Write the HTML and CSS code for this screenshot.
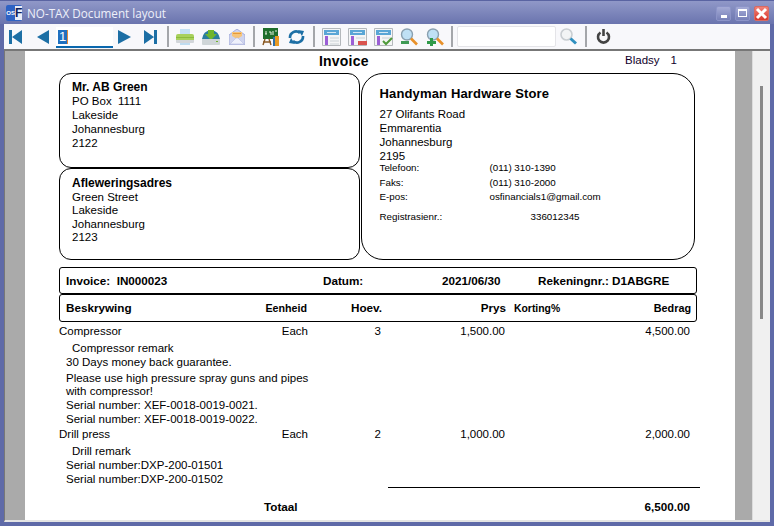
FILE: index.html
```html
<!DOCTYPE html>
<html lang="en">
<head>
  <meta charset="UTF-8" />
  <title>NO-TAX Document layout</title>
  <link rel="stylesheet" href="styles.css">
</head>
<body>
  <div class="window">
    <header class="titlebar">
      <div class="logo"><span class="logo-os">OS</span><span class="logo-f">F</span></div>
      <div class="title-text">NO-TAX Document layout</div>
      <div class="win-btn"><span class="glyph-min"></span></div>
      <div class="win-btn"><span class="glyph-max"></span></div>
      <div class="win-btn win-close">
        <svg width="13" height="13" viewBox="0 0 13 13"><path d="M2 2l9 9M11 2l-9 9" stroke="#fff" stroke-width="3"/></svg>
      </div>
    </header>

    <div class="toolbar">
      <div class="group nav">
        <div class="slot slot-first"><svg width="13" height="14" viewBox="0 0 13 14"><path class="nav-ico" d="M0 0h3v14H0zM13 0v14L3 7z"/></svg></div>
        <div class="slot slot-prev"><svg width="12" height="14" viewBox="0 0 12 14"><path class="nav-ico" d="M12 0v14L0 7z"/></svg></div>
        <div class="page-input"><span class="page-sel">1</span><span class="page-caret"></span></div>
        <div class="slot slot-next"><svg width="13" height="14" viewBox="0 0 13 14"><path class="nav-ico" d="M0 0v14l13-7z"/></svg></div>
        <div class="slot slot-last"><svg width="13" height="14" viewBox="0 0 13 14"><path class="nav-ico" d="M0 0v14l10-7zM10 0h3v14h-3z"/></svg></div>
      </div>
      <div class="sep"></div>
      <div class="group">
        <div class="slot"><svg width="18" height="16" viewBox="0 0 18 16">
          <path d="M4 0h10v6H4z" fill="#c4e0f4"/>
          <path d="M0 7q0-2 2-2h14q2 0 2 2v4H0z" fill="#a8d05c"/>
          <path d="M0 8h18v1H0z" fill="#8cbc3c"/>
          <path d="M0 11h18v2q0 1-1 1H1q-1 0-1-1z" fill="#d2d6da"/>
          <path d="M4 14h10v2H4z" fill="#c0dcf0"/>
        </svg></div>
        <div class="slot"><svg width="18" height="16" viewBox="0 0 18 16">
          <path d="M0 10q1-8 9-9 8 1 9 9z" fill="#2a7d9e"/>
          <path d="M6 1h6v4h3l-6 6-6-6h3z" fill="#6fb52c"/>
          <path d="M0 10h18v5q0 1-1 1H1q-1 0-1-1z" fill="#cfd5d8"/>
          <path d="M14 12h2v1h-2z" fill="#6fb52c"/>
        </svg></div>
        <div class="slot"><svg width="16" height="16" viewBox="0 0 16 16">
          <path d="M0 6l8-6 8 6v10H0z" fill="#cfd4ee" stroke="#a6aedb"/>
          <path d="M3 7V3h10v4l-5 3z" fill="#f6c47a"/>
          <path d="M4 4h8v1H4z" fill="#e59a3a"/>
          <path d="M1 15l6-6h2l6 6z" fill="#eef0fb" stroke="#b6bce2" stroke-width=".6"/>
        </svg></div>
      </div>
      <div class="sep"></div>
      <div class="group group-tools">
        <div class="slot"><svg width="18" height="18" viewBox="0 0 18 18">
          <path d="M1 0h15v11H1z" fill="#1f6e2c"/>
          <path d="M3 6h2M4 3v3M7 4h2v3M11 3v4M13 3h2" stroke="#e8f3df" stroke-width="1" fill="none"/>
          <path d="M3 11l-2 6M7 11l2 6M1 14h8" stroke="#8a5a24" stroke-width="1.4" fill="none"/>
          <path d="M11 9h3v9h-3z" fill="#2f6fa8"/>
          <path d="M13 8h4v10h-4z" fill="#e89a24"/>
        </svg></div>
        <div class="slot slot-refresh"><svg width="17" height="16" viewBox="0 0 17 16">
          <path d="M2 9a6 6 0 0 1 10-5" fill="none" stroke="#1d6fa5" stroke-width="2.6"/>
          <path d="M15 7a6 6 0 0 1-10 5" fill="none" stroke="#1d6fa5" stroke-width="2.6"/>
          <path d="M10 1l6 1-2 5z" fill="#1d6fa5"/>
          <path d="M7 15l-6-1 2-5z" fill="#1d6fa5"/>
        </svg></div>
      </div>
      <div class="sep"></div>
      <div class="group">
        <div class="slot"><svg width="19" height="18" viewBox="0 0 19 18">
          <path class="doc-frame" d="M.5.5h18v17H.5z"/>
          <path d="M2 2h15v5H2z" fill="#5aa6d6"/><path d="M5 4h9v1H5z" fill="#d6e8f4"/>
          <path d="M3 8h3v9H3z" fill="#9b5fd6"/>
          <path d="M8 9h9v2H8zM8 12h9v2H8zM8 15h9v2H8z" fill="#dfe3e6"/>
        </svg></div>
        <div class="slot"><svg width="19" height="18" viewBox="0 0 19 18">
          <path class="doc-frame" d="M.5.5h18v17H.5z"/>
          <path d="M2 2h15v5H2z" fill="#5aa6d6"/><path d="M5 4h9v1H5z" fill="#d6e8f4"/>
          <path d="M3 8h3v9H3z" fill="#9b5fd6"/>
          <path d="M8 9h9v2H8z" fill="#dfe3e6"/>
          <path d="M10 13h9v4h-9z" fill="#d9534f"/>
        </svg></div>
        <div class="slot"><svg width="19" height="18" viewBox="0 0 19 18">
          <path class="doc-frame" d="M.5.5h18v17H.5z"/>
          <path d="M2 2h15v5H2z" fill="#5aa6d6"/><path d="M5 4h9v1H5z" fill="#d6e8f4"/>
          <path d="M3 8h3v9H3z" fill="#9b5fd6"/>
          <path d="M8 9h9v2H8z" fill="#dfe3e6"/>
          <path d="M9 13l3 3 6-6" fill="none" stroke="#4f9a3a" stroke-width="2"/>
        </svg></div>
        <div class="slot"><svg width="18" height="18" viewBox="0 0 18 18">
          <circle cx="7" cy="6.5" r="5.5" fill="#bfe0f5" stroke="#8aa0b0" stroke-width="1.4"/>
          <path d="M11 10.500l6 6" stroke="#e8912a" stroke-width="2.600"/>
          <path d="M1 13h8v3H1z" fill="#3f9a55"/>
        </svg></div>
        <div class="slot"><svg width="18" height="18" viewBox="0 0 18 18">
          <circle cx="7" cy="6.5" r="5.5" fill="#bfe0f5" stroke="#8aa0b0" stroke-width="1.4"/>
          <path d="M11 10.500l6 6" stroke="#e8912a" stroke-width="2.600"/>
          <path d="M4 10h3v3h3v3H7v2H4v-2H1v-3h3z" fill="#2f9a4a"/>
        </svg></div>
      </div>
      <div class="sep"></div>
      <div class="group group-tools">
        <div class="search-box"></div>
        <div class="slot slot-refresh"><svg width="17" height="17" viewBox="0 0 17 17">
          <circle cx="6.500" cy="6.500" r="5.500" fill="#f2f4f5" stroke="#c9ced2" stroke-width="1.600"/>
          <path d="M10.500 10.500l5.500 5" stroke="#2f8fbf" stroke-width="3"/>
        </svg></div>
      </div>
      <div class="sep"></div>
      <div class="group">
        <div class="slot"><svg width="15" height="15" viewBox="0 0 15 15">
          <path d="M4.500 3.500a5.500 5.500 0 1 0 6 0" fill="none" stroke="#444" stroke-width="2.600"/>
          <path d="M7.500 0v7" stroke="#444" stroke-width="2.600"/>
        </svg></div>
      </div>
    </div>

    <div class="viewer">
      <main class="page">
        <div class="page-head">
          <div class="doc-title">Invoice</div>
          <div class="page-num"><span>Bladsy</span><span>1</span></div>
        </div>

        <section class="address-grid">
          <div class="address-col">
            <div class="box box-bill">
              <div class="b">Mr. AB Green</div>
              <div>PO Box&nbsp; 1111</div>
              <div>Lakeside</div>
              <div>Johannesburg</div>
              <div>2122</div>
            </div>
            <div class="box box-ship">
              <div class="b">Afleweringsadres</div>
              <div>Green Street</div>
              <div>Lakeside</div>
              <div>Johannesburg</div>
              <div>2123</div>
            </div>
          </div>
          <div class="box-company">
            <div class="company-name">Handyman Hardware Store</div>
            <div>27 Olifants Road</div>
            <div>Emmarentia</div>
            <div>Johannesburg</div>
            <div>2195</div>
            <div class="contact">
              <div class="contact-row"><span>Telefoon:</span><span>(011) 310-1390</span></div>
              <div class="contact-row row-faks"><span>Faks:</span><span>(011) 310-2000</span></div>
              <div class="contact-row row-epos"><span>E-pos:</span><span>osfinancials1@gmail.com</span></div>
              <div class="contact-row row-reg"><span>Registrasienr.:</span><span class="reg-no">336012345</span></div>
            </div>
          </div>
        </section>

        <div class="bar bar-info">
          <span>Invoice:&nbsp; IN000023</span>
          <span>Datum:</span>
          <span>2021/06/30</span>
          <span>Rekeningnr.: D1ABGRE</span>
        </div>

        <div class="bar bar-head cols">
          <span class="head-desc">Beskrywing</span>
          <span class="num head-unit">Eenheid</span>
          <span class="num">Hoev.</span>
          <span class="num">Prys</span>
          <span class="head-disc">Korting%</span>
          <span class="num head-amt">Bedrag</span>
        </div>

        <section class="lines">
          <div class="cols">
            <span>Compressor</span>
            <span class="num">Each</span>
            <span class="num">3</span>
            <span class="num">1,500.00</span>
            <span></span>
            <span class="num">4,500.00</span>
          </div>
          <div class="remark">Compressor remark</div>
          <div class="note">30 Days money back guarantee.</div>
          <div class="note note-gap">Please use high pressure spray guns and pipes</div>
          <div class="note note-tight">with compressor!</div>
          <div class="note">Serial number: XEF-0018-0019-0021.</div>
          <div class="note">Serial number: XEF-0018-0019-0022.</div>
          <div class="cols line-next">
            <span>Drill press</span>
            <span class="num">Each</span>
            <span class="num">2</span>
            <span class="num">1,000.00</span>
            <span></span>
            <span class="num">2,000.00</span>
          </div>
          <div class="remark">Drill remark</div>
          <div class="note">Serial number:DXP-200-01501</div>
          <div class="note">Serial number:DXP-200-01502</div>
        </section>

        <div class="total-rule"></div>
        <div class="cols total">
          <span></span>
          <span class="total-label">Totaal</span>
          <span></span>
          <span></span>
          <span></span>
          <span class="num">6,500.00</span>
        </div>
      </main>
      <div class="gutter"></div>
      <div class="scrollbar"><div class="thumb"></div></div>
    </div>
  </div>
</body>
</html>
```

FILE: styles.css
```css
* {
  margin: 0;
  padding: 0;
  box-sizing: border-box;
}

body {
  width: 774px;
  height: 526px;
  overflow: hidden;
  font-family: 'Liberation Sans', Arial, sans-serif;
  font-size: 11.5px;
  line-height: 14px;
  color: #000;
}

.window {
  height: 526px;
  display: flex;
  flex-direction: column;
  background: #5f6aa8;
  padding: 0 4px 4px;
}

/* title bar */
.titlebar {
  height: 24px;
  margin: 0 -4px;
  padding: 1px 5px 0 6px;
  display: flex;
  align-items: center;
  gap: 4px;
  background: linear-gradient(#9098c8, #6a74ae);
  border-top: 1px solid #5a64a2;
}

.logo {
  width: 16px;
  height: 16px;
  display: flex;
  align-items: center;
  justify-content: flex-end;
  background: #2e62c4;
  border-radius: 2px;
  font-weight: bold;
}

.logo-os {
  font-size: 6px;
  color: #fff;
}

.logo-f {
  width: 7px;
  font-size: 12px;
  color: #10205a;
  background: #e8ecf8;
  text-align: center;
}

.title-text {
  flex: 1;
  margin-left: 1px;
  font-family: 'Open Sans', sans-serif;
  font-size: 11.7px;
  color: #eef0fa;
}

.win-btn {
  width: 15px;
  height: 15px;
  display: flex;
  align-items: center;
  justify-content: center;
  background: linear-gradient(#a5abd6, #7780b8);
  border: 1px solid #8c94c8;
  border-radius: 2px;
}

.win-close {
  background: linear-gradient(#f0837a, #d8372c);
  border-color: #d86a62;
}

.glyph-min {
  width: 6px;
  height: 3px;
  margin-top: 7px;
  background: #fff;
}

.glyph-max {
  width: 9px;
  height: 8px;
  border: 1px solid #fff;
  border-top-width: 2px;
}

/* toolbar */
.toolbar {
  height: 25px;
  flex: none;
  display: flex;
  align-items: center;
  background: #f8f8fb;
}

.group {
  display: flex;
  align-items: center;
}

.nav {
  padding-right: 1px;
}

.group-tools {
  padding-right: 2px;
}

.slot {
  width: 26px;
  height: 22px;
  display: flex;
  align-items: center;
  justify-content: center;
}

.slot-first {
  width: 22px;
}

.slot-prev {
  margin-left: 4px;
}

.slot-next {
  width: 23px;
}

.slot-last {
  margin-left: 1px;
}

.slot-refresh {
  width: 24px;
}

.nav-ico {
  fill: #1d6fa5;
}

.doc-frame {
  fill: #f4f5f6;
  stroke: #b4b8bc;
}

.sep {
  width: 2px;
  height: 21px;
  margin: 0 3px;
  background: #a4a6aa;
}

.page-input {
  width: 57px;
  height: 21px;
  margin-top: 1px;
  padding: 3px 0 0 2px;
  display: flex;
  align-items: flex-start;
  background: #fff;
  border-bottom: 2px solid #0a68ae;
  font-size: 13px;
}

.page-sel {
  height: 14px;
  padding: 0 1px;
  background: #1f70c0;
  color: #fff;
}

.page-caret {
  width: 1px;
  height: 14px;
  background: #e08a3c;
}

.search-box {
  width: 99px;
  height: 21px;
  margin-left: 1px;
  background: #fff;
  border: 1px solid #e4e4e8;
  border-radius: 2px;
}

/* report viewer */
.viewer {
  flex: 1;
  display: flex;
  overflow: hidden;
  background: #aaa;
  border-top: 2px solid #777;
  border-left: 1px solid #777;
  border-bottom: 2px solid #e4e4e4;
}

.page {
  width: 710px;
  margin-left: 20px;
  flex: none;
  background: #fff;
  padding-left: 34px;
}

.gutter {
  flex: 1;
}

.scrollbar {
  width: 18px;
  flex: none;
  padding: 35px 0 0 7px;
  background: #f0f0f0;
  border-left: 1px solid #dcdcdc;
}

.thumb {
  width: 3px;
  height: 233px;
  background: #888;
}

.page-head {
  height: 22px;
  display: flex;
  padding: 2px 58px 0 260px;
}

.doc-title {
  font-size: 14px;
  line-height: 16px;
  font-weight: bold;
  letter-spacing: 0.2px;
}

.page-num {
  margin-left: auto;
  line-height: 15px;
  color: #10002a;
  display: flex;
  gap: 11px;
}

/* address boxes */
.address-grid {
  display: flex;
  gap: 1px;
  width: 636px;
  height: 187px;
}

.address-col {
  width: 301px;
  display: flex;
  flex-direction: column;
}

.box {
  border: 1px solid #000;
  border-radius: 12px;
  padding: 6px 12px 0;
}

.box-bill {
  height: 95px;
}

.box-ship {
  height: 92px;
  padding-top: 8px;
  line-height: 13.5px;
}

.b {
  font-size: 12px;
  font-weight: bold;
}

.box-company {
  width: 335px;
  border: 1px solid #000;
  border-radius: 22px;
  padding: 12px 18px 0;
}

.company-name {
  font-size: 13px;
  line-height: 16px;
  font-weight: bold;
  letter-spacing: 0.15px;
  margin-bottom: 5px;
}

.contact {
  font-size: 9.8px;
  line-height: 10px;
}

.contact-row {
  display: grid;
  grid-template-columns: 110px 1fr;
}

.row-faks {
  margin-top: 5px;
}

.row-epos {
  margin-top: 4px;
}

.row-reg {
  margin-top: 10px;
}

.reg-no {
  padding-left: 41px;
}

/* invoice bars and table */
.bar {
  width: 638px;
  height: 27px;
  border: 1px solid #000;
  border-radius: 3px;
  font-size: 11.7px;
  font-weight: bold;
  align-items: center;
}

.bar-info {
  display: grid;
  grid-template-columns: 257px 119px 96px 1fr;
  margin-top: 7px;
  padding: 1px 0 0 6px;
}

.bar-head {
  height: 28px;
}

.cols {
  display: grid;
  grid-template-columns: 190px 59px 73px 124px 85px 100px;
}

.bar-head.cols {
  align-items: center;
}

.num {
  text-align: right;
  white-space: nowrap;
}

.head-desc {
  padding-left: 6px;
}

.head-unit {
  padding-right: 2px;
  font-size: 10.7px;
}

.head-disc {
  padding: 2px 0 0 8px;
  font-size: 10.4px;
}

.head-amt {
  font-size: 10.8px;
}

.lines {
  padding-top: 2px;
  height: 165px;
}

.remark {
  margin-top: 3px;
  padding-left: 13px;
}

.note {
  padding-left: 7px;
  width: 256px;
}

.note-gap {
  margin-top: 2px;
  white-space: nowrap;
}

.note-tight {
  margin-top: -1px;
}

.line-next {
  margin-top: 1px;
}

.total-rule {
  width: 312px;
  height: 1px;
  margin-left: 329px;
  background: #000;
}

.total {
  margin-top: 12px;
  font-size: 11.7px;
  font-weight: bold;
}

.total-label {
  padding-left: 15px;
}
```
